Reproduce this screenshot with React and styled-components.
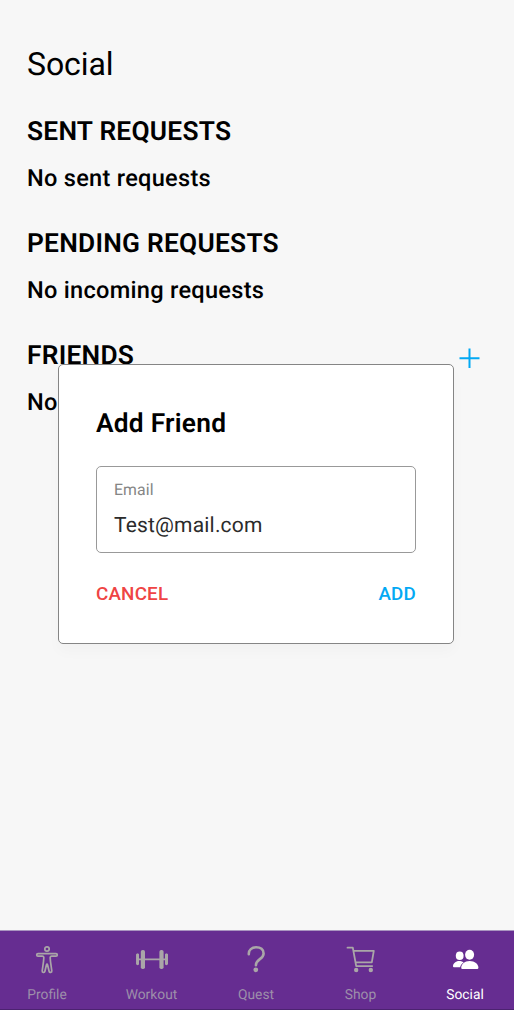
import React from "react";
import styled, { createGlobalStyle } from "styled-components";

const GlobalStyle = createGlobalStyle`
  * { box-sizing: border-box; }
  body {
    margin: 0;
    background: #f7f7f7;
    font-family: Roboto, "Liberation Sans", sans-serif;
    color: #000;
    text-rendering: geometricPrecision;
  }
`;

const Screen = styled.div`
  position: relative;
  width: 514px;
  height: 1010px;
  display: flex;
  flex-direction: column;
  overflow: hidden;
  background: #f7f7f7;
`;

const Content = styled.main`
  flex: 1;
  padding: 43px 27px 0;
`;

const PageTitle = styled.h1`
  margin: 0 0 26px;
  font-size: 32px;
  line-height: 42px;
  font-weight: 400;
  letter-spacing: -0.1px;
`;

const Section = styled.section`
  height: 112px;
`;

const SectionHeader = styled.div`
  display: flex;
  justify-content: space-between;
  height: 42px;
`;

const SectionTitle = styled.h2`
  margin: 0;
  font-size: 26.3px;
  line-height: 42px;
  font-weight: 600;
  letter-spacing: 0.25px;
`;

const SectionText = styled.p`
  margin: 0;
  padding-top: 9px;
  font-size: 23.6px;
  line-height: 32px;
  font-weight: 500;
  letter-spacing: 0.27px;
`;

const AddButton = styled.button`
  display: flex;
  width: 22px;
  height: 22px;
  margin: 12px 7px 0 0;
  padding: 0;
  border: 0;
  background: none;
  color: #03a9f4;
`;

const Dialog = styled.div`
  position: absolute;
  left: 58px;
  top: 364px;
  width: 396px;
  height: 280px;
  padding: 39px 37px 0;
  border: 1px solid #858585;
  border-radius: 5px;
  background: #fff;
  box-shadow: 0 8px 14px rgba(0, 0, 0, 0.025);
`;

const DialogTitle = styled.h3`
  margin: 0 0 22px;
  font-size: 26.3px;
  line-height: 40px;
  font-weight: 600;
  letter-spacing: 0.25px;
`;

const Field = styled.label`
  display: flex;
  flex-direction: column;
  height: 87px;
  padding: 13px 17px 0;
  border: 1.5px solid #999;
  border-radius: 5px;
`;

const FieldLabel = styled.span`
  font-size: 15.8px;
  line-height: 20px;
  letter-spacing: 0.1px;
  color: #858585;
`;

const FieldValue = styled.span`
  padding-top: 12px;
  font-size: 21px;
  line-height: 28px;
  letter-spacing: 0.18px;
  color: #2b2b2b;
`;

const Actions = styled.div`
  display: flex;
  justify-content: space-between;
  padding-top: 28px;
`;

const Action = styled.button`
  padding: 0;
  border: 0;
  background: none;
  font-family: inherit;
  font-size: 18.8px;
  line-height: 26px;
  font-weight: 500;
  letter-spacing: 0.2px;
  color: ${(p) => p.$color};
`;

const TabBar = styled.nav`
  display: flex;
  justify-content: center;
  height: 80px;
  padding-right: 2px;
  border-top: 1px solid #a995c0;
  border-bottom: 1px solid #4c2270;
  background: #662d91;
`;

const Tab = styled.a`
  flex: 0 0 104.5px;
  display: flex;
  flex-direction: column;
  align-items: center;
  padding-top: 13px;
  color: ${(p) => (p.$active ? "#fff" : "#aaa6a8")};
`;

const TabIcon = styled.svg`
  width: 34px;
  height: 32px;
  fill: none;
  stroke: currentColor;
  stroke-width: ${(p) => p.$stroke || 1.8};
  stroke-linecap: round;
  stroke-linejoin: round;
`;

const TabLabel = styled.span`
  margin-top: 9px;
  font-size: 13.8px;
  line-height: 20px;
  color: ${(p) => (p.$active ? "#fff" : "#9d8faa")};
`;

const BodyIcon = () => (
  <TabIcon viewBox="0 0 34 32" $stroke={1.7}>
    <circle cx="17" cy="5" r="2.2" />
    <path d="M8 9.6h18a1.3 1.3 0 0 1 0 2.6h-4.4q-1.6 0-1.4 1.8l.3 3.6 1.3 9.2c.2 1.9-2.3 2.3-2.7.5L17.6 21q-.6-1.8-1.2 0l-1.5 6.3c-.4 1.8-2.9 1.4-2.7-.5l1.3-9.2.3-3.6q.2-1.8-1.4-1.8H8a1.3 1.3 0 0 1 0-2.6z" />
  </TabIcon>
);

const BarbellIcon = () => (
  <TabIcon viewBox="0 0 34 32">
    <path d="M2.8 15.3h28.4" />
    <g strokeWidth="2.8"><path d="M2.6 11v8.8M31.4 11v8.8" style={undefined} /></g>
    <rect x="5.8" y="6" width="4.2" height="19" rx="1.8" fill="currentColor" stroke="none" />
    <rect x="24.4" y="6" width="4.2" height="19" rx="1.8" fill="currentColor" stroke="none" />
    <rect x="1.2" y="9.7" width="2.8" height="10.8" rx="1.3" fill="currentColor" stroke="none" />
    <rect x="30.2" y="9.7" width="2.8" height="10.8" rx="1.3" fill="currentColor" stroke="none" />
  </TabIcon>
);

const HelpIcon = () => (
  <TabIcon viewBox="0 0 34 32" $stroke={2.6}>
    <path d="M9.8 10.2C9.6 5.8 12.8 3.3 17.2 3.3c4.4 0 7.4 2.2 7.4 6.1 0 5.9-7.7 5.6-7.7 11.8" />
    <circle cx="16.8" cy="25.8" r="2.4" fill="currentColor" stroke="none" />
  </TabIcon>
);

const CartIcon = () => (
  <TabIcon viewBox="0 0 34 32">
    <path d="M3.5 3.7h5.3l3.4 18.4h16M9.4 6.8h20.4l-2 11.6H11.6" />
    <circle cx="12.2" cy="26" r="2.2" fill="currentColor" stroke="none" />
    <circle cx="26.8" cy="26" r="2.2" fill="currentColor" stroke="none" />
  </TabIcon>
);

const PeopleIcon = () => (
  <TabIcon viewBox="0 0 34 32">
    <g fill="currentColor" stroke="none">
      <ellipse cx="11.7" cy="11.7" rx="3.9" ry="4.3" />
      <ellipse cx="21.6" cy="10.8" rx="4.5" ry="5" />
      <path d="M13.2 17.2C8.4 16.1 5 19.2 5 22.3q0 .9.9.9h6.2c.5-2.2 1.8-3.7 3.6-4.7q-1.1-1-2.5-1.3z" />
      <path d="M21.6 17c-5 0-8.4 3-8.4 6.8q0 1.2 1.2 1.2h14.8q1.2 0 1.2-1.2c0-3.8-3.6-6.8-8.8-6.8z" />
    </g>
  </TabIcon>
);

const tabs = [
  { label: "Profile", Icon: BodyIcon },
  { label: "Workout", Icon: BarbellIcon },
  { label: "Quest", Icon: HelpIcon },
  { label: "Shop", Icon: CartIcon },
  { label: "Social", Icon: PeopleIcon, active: true },
];

export default function App() {
  return (
    <>
      <GlobalStyle />
      <Screen>
        <Content>
          <PageTitle>Social</PageTitle>
          <Section>
            <SectionHeader><SectionTitle>SENT REQUESTS</SectionTitle></SectionHeader>
            <SectionText>No sent requests</SectionText>
          </Section>
          <Section>
            <SectionHeader><SectionTitle>PENDING REQUESTS</SectionTitle></SectionHeader>
            <SectionText>No incoming requests</SectionText>
          </Section>
          <Section>
            <SectionHeader>
              <SectionTitle>FRIENDS</SectionTitle>
              <AddButton aria-label="Add friend">
                <svg width="22" height="22" viewBox="0 0 22 22" fill="none" stroke="currentColor" strokeWidth="2">
                  <path d="M11.5 1.5v19.5M1.5 11.2h20" />
                </svg>
              </AddButton>
            </SectionHeader>
            <SectionText>No</SectionText>
          </Section>
        </Content>
        <TabBar>
          {tabs.map(({ label, Icon, active }) => (
            <Tab key={label} $active={active}>
              <Icon />
              <TabLabel $active={active}>{label}</TabLabel>
            </Tab>
          ))}
        </TabBar>
        <Dialog role="dialog">
          <DialogTitle>Add Friend</DialogTitle>
          <Field>
            <FieldLabel>Email</FieldLabel>
            <FieldValue>Test@mail.com</FieldValue>
          </Field>
          <Actions>
            <Action $color="#ef4444">CANCEL</Action>
            <Action $color="#03a9f4">ADD</Action>
          </Actions>
        </Dialog>
      </Screen>
    </>
  );
}
